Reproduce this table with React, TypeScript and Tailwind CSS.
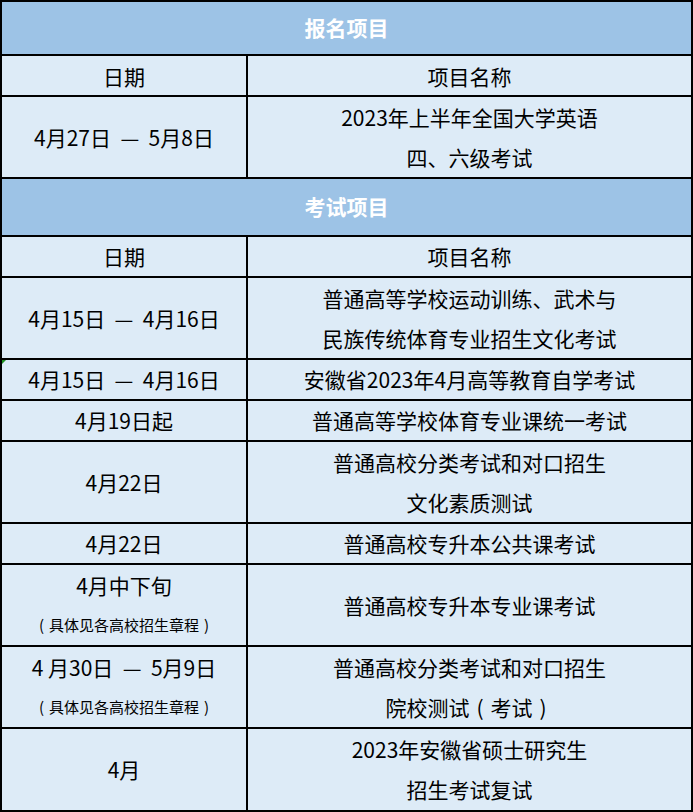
import React from "react";

type Row = {
  date: React.ReactNode;
  name: React.ReactNode;
  tall?: boolean;
  mark?: boolean;
};

// full-width bracket drawn in its own em box so it keeps its spacing
function P({ c, w }: { c: string; w: string }) {
  return <span className={`inline-block ${w} text-center`}>{c}</span>;
}

const signup: Row[] = [
  {
    date: "4月27日  —  5月8日",
    name: (
      <>
        <div>2023年上半年全国大学英语</div>
        <div>四、六级考试</div>
      </>
    ),
    tall: true,
  },
];

const note = (
  <div className="text-[15px]">
    <P c="(" w="w-[15px]" />
    具体见各高校招生章程
    <P c=")" w="w-[15px]" />
  </div>
);

const exams: Row[] = [
  {
    date: "4月15日  —  4月16日",
    name: (
      <>
        <div>普通高等学校运动训练、武术与</div>
        <div>民族传统体育专业招生文化考试</div>
      </>
    ),
    tall: true,
  },
  { date: "4月15日  —  4月16日", name: "安徽省2023年4月高等教育自学考试", mark: true },
  { date: "4月19日起", name: "普通高等学校体育专业课统一考试" },
  {
    date: "4月22日",
    name: (
      <>
        <div>普通高校分类考试和对口招生</div>
        <div>文化素质测试</div>
      </>
    ),
    tall: true,
  },
  { date: "4月22日", name: "普通高校专升本公共课考试" },
  {
    date: (
      <>
        <div>4月中下旬</div>
        {note}
      </>
    ),
    name: "普通高校专升本专业课考试",
    tall: true,
  },
  {
    date: (
      <>
        <div>4 月30日  —  5月9日</div>
        {note}
      </>
    ),
    name: (
      <>
        <div>普通高校分类考试和对口招生</div>
        <div>
          院校测试
          <P c="(" w="w-[21px]" />
          考试
          <P c=")" w="w-[21px]" />
        </div>
      </>
    ),
    tall: true,
  },
  {
    date: "4月",
    name: (
      <>
        <div>2023年安徽省硕士研究生</div>
        <div>招生考试复试</div>
      </>
    ),
    tall: true,
  },
];

function SectionHeader({ title, h }: { title: string; h: string }) {
  return (
    <div className={`${h} flex items-center justify-center bg-[#9dc3e6] border-b-2 border-black text-white font-bold`}>
      {title}
    </div>
  );
}

function DataRow({ row, last }: { row: Row; last?: boolean }) {
  const h = row.tall ? "h-[82px]" : "h-[41px]";
  return (
    <div className={`flex ${h} ${last ? "" : "border-b-2 border-black"}`}>
      <div className="relative w-[246px] shrink-0 border-r-2 border-black flex flex-col items-center justify-center leading-[40px] text-center whitespace-pre">
        {row.mark && (
          <span className="absolute left-0 top-0 w-0 h-0 border-t-[4px] border-t-[#1f8f1f] border-r-[4px] border-r-transparent" />
        )}
        {row.date}
      </div>
      <div className="flex-1 flex flex-col items-center justify-center leading-[40px] text-center">
        {row.name}
      </div>
    </div>
  );
}

export default function App() {
  const head: Row = { date: "日期", name: "项目名称" };
  return (
    <div
      className="w-[693px] h-[812px] bg-[#ddebf7] border-2 border-black text-black text-[21px] flex flex-col"
      style={{ fontFamily: '"Noto Sans CJK SC", "Noto Sans", sans-serif' }}
    >
      <SectionHeader title="报名项目" h="h-[55px]" />
      <DataRow row={head} />
      {signup.map((r, i) => (
        <DataRow key={i} row={r} />
      ))}
      <SectionHeader title="考试项目" h="h-[58px]" />
      <DataRow row={head} />
      {exams.map((r, i) => (
        <DataRow key={i} row={r} last={i === exams.length - 1} />
      ))}
    </div>
  );
}
